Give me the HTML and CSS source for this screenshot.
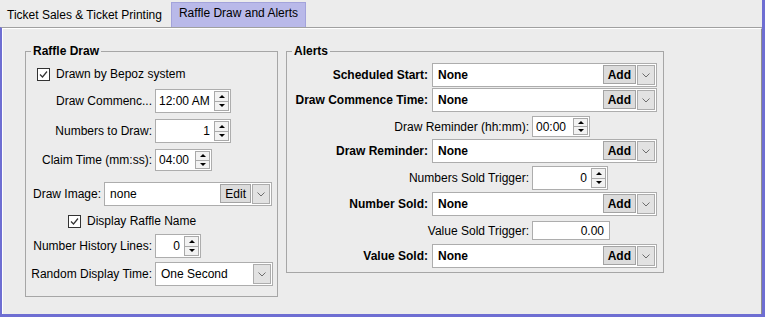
FILE: index.html
```html
<!DOCTYPE html>
<html lang="en">
<head>
    <meta charset="UTF-8">
    <title>Raffle Draw and Alerts</title>
    <link rel="stylesheet" href="styles.css">
</head>
<body>
<div class="window">
    <div class="tabs">
        <div class="tab">Ticket Sales &amp; Ticket Printing</div>
        <div class="tab active">Raffle Draw and Alerts</div>
    </div>
    <div class="panel">
        <div class="content">
            <!-- Raffle draw settings -->
            <fieldset class="group raffle">
                <legend>Raffle Draw</legend>
                <div class="row chk-row r1">
                    <svg class="check" width="13" height="13"><rect x="0.5" y="0.5" width="12" height="12" fill="#fff" stroke="#333"/><polyline points="3,6.5 5.5,9 10,3.5" fill="none" stroke="#333" stroke-width="1.2"/></svg>
                    Drawn by Bepoz system
                </div>
                <div class="row r2">
                    <span class="lbl">Draw Commenc...</span>
                    <div class="spin w-time">
                        <div class="val">12:00 AM</div>
                        <div class="arrows"><span class="up"></span><span class="down"></span></div>
                    </div>
                </div>
                <div class="row r3">
                    <span class="lbl">Numbers to Draw:</span>
                    <div class="spin w-time">
                        <div class="val num">1</div>
                        <div class="arrows"><span class="up"></span><span class="down"></span></div>
                    </div>
                </div>
                <div class="row r4">
                    <span class="lbl">Claim Time (mm:ss):</span>
                    <div class="spin w-claim">
                        <div class="val">04:00</div>
                        <div class="arrows"><span class="up"></span><span class="down"></span></div>
                    </div>
                </div>
                <div class="row r5">
                    <span class="lbl-free">Draw Image:</span>
                    <div class="combo w-image">
                        <div class="val">none</div>
                        <div class="btn">Edit</div>
                        <div class="drop"><svg width="8" height="5"><polyline points="0.5,0.5 4,4 7.5,0.5" fill="none" stroke="#6d6d6d"/></svg></div>
                    </div>
                </div>
                <div class="row chk-row r6">
                    <svg class="check" width="13" height="13"><rect x="0.5" y="0.5" width="12" height="12" fill="#fff" stroke="#333"/><polyline points="3,6.5 5.5,9 10,3.5" fill="none" stroke="#333" stroke-width="1.2"/></svg>
                    Display Raffle Name
                </div>
                <div class="row r7">
                    <span class="lbl">Number History Lines:</span>
                    <div class="spin w-hist">
                        <div class="val num">0</div>
                        <div class="arrows"><span class="up"></span><span class="down"></span></div>
                    </div>
                </div>
                <div class="row r8">
                    <span class="lbl">Random Display Time:</span>
                    <div class="combo w-random">
                        <div class="val">One Second</div>
                        <div class="drop"><svg width="8" height="5"><polyline points="0.5,0.5 4,4 7.5,0.5" fill="none" stroke="#6d6d6d"/></svg></div>
                    </div>
                </div>
            </fieldset>

            <!-- Alerts -->
            <fieldset class="group alerts">
                <legend>Alerts</legend>
                <div class="row a1">
                    <span class="lbl-b">Scheduled Start:</span>
                    <div class="combo w-alert">
                        <div class="val bold">None</div>
                        <div class="btn bold">Add</div>
                        <div class="drop"><svg width="8" height="5"><polyline points="0.5,0.5 4,4 7.5,0.5" fill="none" stroke="#6d6d6d"/></svg></div>
                    </div>
                </div>
                <div class="row a2">
                    <span class="lbl-b">Draw Commence Time:</span>
                    <div class="combo w-alert">
                        <div class="val bold">None</div>
                        <div class="btn bold">Add</div>
                        <div class="drop"><svg width="8" height="5"><polyline points="0.5,0.5 4,4 7.5,0.5" fill="none" stroke="#6d6d6d"/></svg></div>
                    </div>
                </div>
                <div class="row a3">
                    <span class="lbl-n">Draw Reminder (hh:mm):</span>
                    <div class="spin w-hhmm">
                        <div class="val">00:00</div>
                        <div class="arrows"><span class="up"></span><span class="down"></span></div>
                    </div>
                </div>
                <div class="row a4">
                    <span class="lbl-b">Draw Reminder:</span>
                    <div class="combo w-alert">
                        <div class="val bold">None</div>
                        <div class="btn bold">Add</div>
                        <div class="drop"><svg width="8" height="5"><polyline points="0.5,0.5 4,4 7.5,0.5" fill="none" stroke="#6d6d6d"/></svg></div>
                    </div>
                </div>
                <div class="row a5">
                    <span class="lbl-n">Numbers Sold Trigger:</span>
                    <div class="spin w-sold">
                        <div class="val num">0</div>
                        <div class="arrows"><span class="up"></span><span class="down"></span></div>
                    </div>
                </div>
                <div class="row a6">
                    <span class="lbl-b">Number Sold:</span>
                    <div class="combo w-alert">
                        <div class="val bold">None</div>
                        <div class="btn bold">Add</div>
                        <div class="drop"><svg width="8" height="5"><polyline points="0.5,0.5 4,4 7.5,0.5" fill="none" stroke="#6d6d6d"/></svg></div>
                    </div>
                </div>
                <div class="row a7">
                    <span class="lbl-n">Value Sold Trigger:</span>
                    <div class="text-field w-value">0.00</div>
                </div>
                <div class="row a8">
                    <span class="lbl-b">Value Sold:</span>
                    <div class="combo w-alert">
                        <div class="val bold">None</div>
                        <div class="btn bold">Add</div>
                        <div class="drop"><svg width="8" height="5"><polyline points="0.5,0.5 4,4 7.5,0.5" fill="none" stroke="#6d6d6d"/></svg></div>
                    </div>
                </div>
            </fieldset>
        </div>
    </div>
</div>
</body>
</html>
```

FILE: styles.css
```css
body { margin: 0; font: 12px "Liberation Sans", Arial, sans-serif; color: #000; background: #ececec; }
.window { width: 765px; height: 317px; box-sizing: border-box; border-right: 3px solid #6e6ed2; display: flex; flex-direction: column; background: #ececec; }

/* tabs */
.tabs { height: 27px; display: flex; align-items: flex-end; flex-shrink: 0; }
.tab { height: 24px; line-height: 24px; padding: 0 8px; white-space: nowrap; margin-left: -1px; }
.tab.active { height: 25px; line-height: 21px; box-sizing: border-box; margin-left: 1px; padding: 0 7px; background: #b9b9e9; border: 1px solid #a3a3db; border-bottom: none; }

/* tab body */
.panel { flex: 1; display: flex; border-top: 1px solid #a0a0a0; border-left: 2px solid #6e6ed2; border-bottom: 3px solid #6e6ed2; }
.content { flex: 1; display: flex; align-items: flex-start; gap: 8px; padding: 15px 0 0 22px; border-top: 1px solid #fff; border-left: 1px solid #fff; border-right: 1px solid #8e8e8e; }

.group { margin: 0; padding: 0; border: 1px solid #a6a6a6; min-width: 0; box-sizing: border-box; }
.group legend { margin-left: 5px; padding: 0 2px; font-weight: bold; line-height: 15px; }
.raffle { width: 253px; padding-bottom: 10px; }
.alerts { width: 378px; padding-bottom: 4px; }

.row { display: flex; align-items: center; height: 24px; white-space: nowrap; }
.chk-row { height: 20px; }
.check { margin-right: 6px; flex-shrink: 0; }

/* raffle rows */
.r1 { margin-top: 5px; padding-left: 11px; }
.r2 { margin-top: 5px; }
.r3 { margin-top: 6px; }
.r4 { margin-top: 6px; height: 22px; }
.r5 { margin-top: 11px; padding-left: 7px; }
.r6 { margin-top: 5px; padding-left: 42px; }
.r7 { margin-top: 3px; }
.r8 { margin-top: 4px; }
.lbl { width: 126px; text-align: right; margin-right: 3px; flex-shrink: 0; }
.lbl-free { margin-right: 3px; }

/* alert rows */
.a1 { margin-top: 4px; }
.a2 { margin-top: 1px; }
.a3 { margin-top: 4px; height: 21px; }
.a4 { margin-top: 2px; }
.a5 { margin-top: 3px; }
.a6 { margin-top: 2px; }
.a7 { margin-top: 5px; height: 19px; }
.a8 { margin-top: 4px; }
.lbl-b { width: 141px; text-align: right; margin-right: 4px; font-weight: bold; flex-shrink: 0; }
.lbl-n { width: 242px; text-align: right; margin-right: 3px; flex-shrink: 0; }

/* spinner */
.spin { display: flex; height: 100%; box-sizing: border-box; border: 1px solid #adadad; background: #fff; }
.spin .val { flex: 1; padding: 0 3px; display: flex; align-items: center; }
.spin .val.num { justify-content: flex-end; }
.arrows { width: 13px; margin: 1px; display: flex; flex-direction: column; border: 1px solid #a9a9a9; background: #f2f2f2; }
.arrows span { flex: 1; display: flex; align-items: center; justify-content: center; }
.arrows .up { border-bottom: 1px solid #a9a9a9; }
.arrows .up::before { content: ""; border-left: 3px solid transparent; border-right: 3px solid transparent; border-bottom: 3px solid #000; }
.arrows .down::before { content: ""; border-left: 3px solid transparent; border-right: 3px solid transparent; border-top: 3px solid #000; }
.w-time { width: 76px; }
.w-claim { width: 57px; }
.w-hist { width: 46px; }
.w-hhmm { width: 58px; }
.w-sold { width: 76px; }

/* combo with buttons */
.combo { display: flex; height: 100%; box-sizing: border-box; border: 1px solid #adadad; background: #fff; padding: 1px; }
.combo .val { flex: 1; padding-left: 4px; display: flex; align-items: center; }
.btn { display: flex; align-items: center; padding: 0 4px; border: 1px solid #a3a3a3; background: #dcdcdc; margin-bottom: 1px; }
.drop { width: 16px; display: flex; align-items: center; justify-content: center; border: 1px solid #acacac; background: #e2e2e2; margin-left: 1px; }
.bold { font-weight: bold; }
.w-image { width: 168px; }
.w-random { width: 118px; }
.w-alert { width: 225px; }

.text-field { height: 100%; box-sizing: border-box; border: 1px solid #adadad; background: #fff; display: flex; align-items: center; justify-content: flex-end; padding-right: 5px; }
.w-value { width: 78px; }
```
